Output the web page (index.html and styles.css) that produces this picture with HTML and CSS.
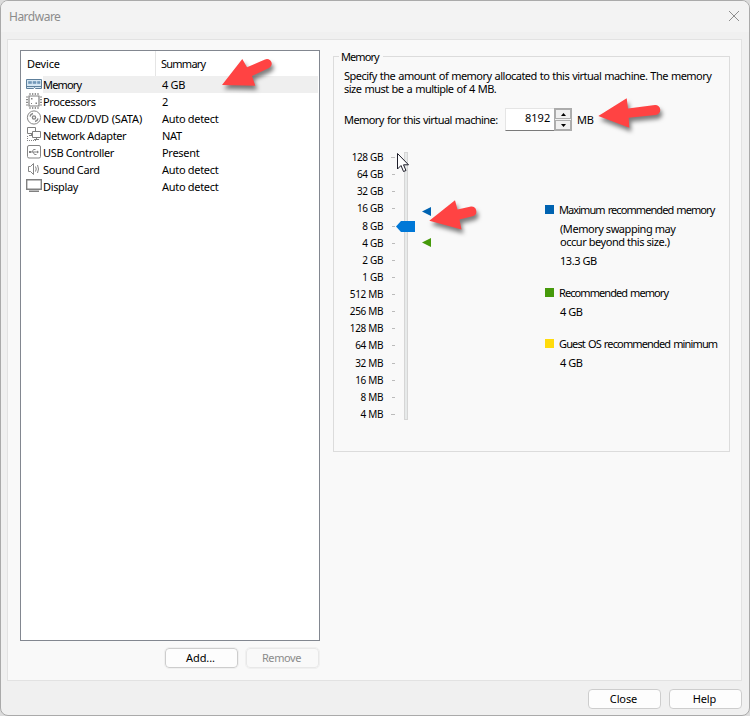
FILE: index.html
```html
<!DOCTYPE html>
<html lang="en">
<head>
<meta charset="utf-8">
<title>Hardware</title>
<link rel="stylesheet" href="styles.css">
</head>
<body>
<div class="window">
  <header class="titlebar"><span>Hardware</span>
    <svg class="x" width="12" height="12" viewBox="0 0 12 12"><path d="M1 1L11 11M11 1L1 11" stroke="#8e8e8e" fill="none"/></svg>
  </header>
  <main class="panel">
    <section class="left">
      <div class="list">
        <div class="head"><span class="c1">Device</span><span class="c2">Summary</span></div>
        <div class="row sel"><svg width="17" height="17" viewBox="0 0 17 17"><path d="M.5 3.500H15.500V12.500H9.500L8.500 11.500 7.500 12.500H.5Z" fill="#d5e6f2" stroke="#5d7f9b"/><path d="M2.500 5.500h3v2h-3zM7 5.500h3v2H7zM11.500 5.500h2.500v2h-2.500z" fill="#7097b8" stroke="#7097b8" stroke-width=".6"/><path d="M1 10.500h15" stroke="#5d7f9b"/></svg><span class="name tight">Memory</span><span class="val">4 GB</span></div>
        <div class="row"><svg width="17" height="17" viewBox="0 0 17 17"><path d="M3 3h10v10H3z" fill="none" stroke="#808080" stroke-width="1.200"/><path d="M4 0v2M6.700 0v2M9.300 0v2M12 0v2M4 14v2M6.700 14v2M9.300 14v2M12 14v2M0 4h2M0 6.700h2M0 9.300h2M0 12h2M14 4h2M14 6.700h2M14 9.300h2M14 12h2" stroke="#8a8a8a" stroke-width="1.200"/><path d="M5 5h1.500v1.500H5zM9.500 9.500h1.500V11H9.500zM5 10h1v1H5z" fill="#808080"/></svg><span class="name">Processors</span><span class="val">2</span></div>
        <div class="row"><svg width="17" height="17" viewBox="0 0 17 17"><g fill="none" stroke="#858585"><circle cx="8" cy="7.500" r="6.600"/><circle cx="8" cy="7.500" r="1.600" stroke-width="1.400"/><path d="M4 6.500a4 4 0 0 1 3-3M12 8.500a4 4 0 0 1-3 3" stroke-width="1.400"/></g></svg><span class="name cd">New CD/DVD (SATA)</span><span class="val">Auto detect</span></div>
        <div class="row"><svg width="17" height="17" viewBox="0 0 17 17"><g fill="#fff" stroke="#808080"><path d="M1.500.5h8v6h-8zM3 8.500h4M5.500 6.500v2"/><path d="M6.500 4.500h8v6h-8zM8 12.500h5M10.500 10.500v2"/><path d="M1.500 9v5M1 13.500h9" stroke-dasharray="1 1"/></g></svg><span class="name">Network Adapter</span><span class="val">NAT</span></div>
        <div class="row"><svg width="17" height="17" viewBox="0 0 17 17"><g fill="none" stroke="#858585"><rect x="1.500" y="1.500" width="13" height="12.500" rx="1.500"/><path d="M3.500 8h8M6 8l1.500-2.500h2M7 8l1.500 2.500h2"/></g><path d="M11 6.500l2 1.500-2 1.500zM3 7h2v2H3z" fill="#808080"/></svg><span class="name">USB Controller</span><span class="val">Present</span></div>
        <div class="row"><svg width="17" height="17" viewBox="0 0 17 17"><g fill="none" stroke="#858585"><path d="M2.500 5.500H4.500L7.500 2.500v11L4.500 10.500H2.500z"/><path d="M9.500 5.500q1.500 2.500 0 5M11.500 4q2 4 0 8"/></g></svg><span class="name">Sound Card</span><span class="val">Auto detect</span></div>
        <div class="row"><svg width="17" height="17" viewBox="0 0 17 17"><path d="M.7 1.700h14.600v9.600H.7zM3 13.300h10" fill="none" stroke="#808080" stroke-width="1.400"/></svg><span class="name">Display</span><span class="val">Auto detect</span></div>
      </div>
      <div class="actions"><button>Add...</button><button disabled>Remove</button></div>
    </section>
    <section class="group">
      <h2 class="tight">Memory</h2>
      <p class="intro">Specify the amount of memory allocated to this virtual machine. The memory<br>size must be a multiple of 4 MB.</p>
      <div class="amount"><span class="label">Memory for this virtual machine:</span>
        <div class="spin"><span>8192</span><div class="updown"><i><svg width="5" height="3"><path d="M0 3L2.500 0L5 3z"/></svg></i><i><svg width="5" height="3"><path d="M0 0L2.500 3L5 0z"/></svg></i></div></div><span>MB</span></div>
      <div class="body">
        <ul class="scale"><li>128 GB</li><li>64 GB</li><li>32 GB</li><li>16 GB</li><li>8 GB</li><li>4 GB</li><li>2 GB</li><li>1 GB</li><li>512 MB</li><li>256 MB</li><li>128 MB</li><li>64 MB</li><li>32 MB</li><li>16 MB</li><li>8 MB</li><li>4 MB</li></ul>
        <div class="track"></div>
        <div class="legend">
          <div class="item blue"><b class="tight">Maximum recommended memory</b><p>(Memory swapping may<br>occur beyond this size.)</p><p>13.3 GB</p></div>
          <div class="item green"><b class="tight">Recommended memory</b><p>4 GB</p></div>
          <div class="item yellow"><b class="tight">Guest OS recommended minimum</b><p>4 GB</p></div>
        </div>
      </div>
    </section>
  </main>
  <footer><button>Close</button><button>Help</button></footer>
</div>
<svg class="overlay" width="750" height="716" viewBox="0 0 750 716">
  <path d="M396 226.500L401 221H415V232H401z" fill="#0078d7"/>
  <path d="M422 211.500L431 207V216z" fill="#0063b1"/>
  <path d="M422 242.500L431 238V247z" fill="#469a0b"/>
  <path d="M397.500 153.500V169L401 165.500L403.500 171.500L406 170.500L403.500 164.800H408.500z" fill="#fff" stroke="#1c1c28"/>
  <g class="arrows" fill="#ff4343">
    <path d="M222 85L242.300 59L247 67.300L265 59.500A4.600 4.600 0 0 1 269 68L252 76L255.300 85.700z"/>
    <path d="M598.300 116L626.700 98.300L628 108.500L655 105A5 5 0 0 1 655.500 115L628.700 117.700L629.300 127.700z"/>
    <path d="M429.300 220.700L455 200.300L457.500 209.500L471 206.500A5 5 0 0 1 473.500 216L459.500 219.500L461.500 229.500z"/>
  </g>
</svg>
</body>
</html>
```
FILE: styles.css
```css
* { box-sizing: border-box; margin: 0; padding: 0; }
body { width: 750px; height: 716px; overflow: hidden; background: #dcdcdc; font: 11px/13px "Noto Sans", sans-serif; letter-spacing: -.3px; color: #000; }
.tight { letter-spacing: -.92px; word-spacing: 1px; }
.window { width: 750px; height: 716px; border: 1px solid #aaa; border-radius: 8px; background: #f0f0f0; overflow: hidden; }
.titlebar { height: 31px; background: #f3f3f3; display: flex; justify-content: space-between; align-items: center; padding: 0 9px 0 8px; color: #8c8c8c; font-size: 12px; letter-spacing: -.5px; }
.titlebar span { margin-top: -1px; }
.titlebar .x { display: block; margin-top: -2px; }
.panel { margin: 7px 0 0 6px; width: 735px; height: 642px; border: 1px solid #e2e2e2; background: #f9f9f9; display: flex; align-items: flex-start; padding: 10px 0 0 12px; }
.left { width: 300px; }
.list { height: 591px; border: 1px solid #828790; background: #fff; }
.head { height: 25px; display: flex; line-height: 25px; }
.head .c1 { width: 135px; padding-left: 6px; border-right: 1px solid #e5e5e5; letter-spacing: -.2px; }
.head .c2 { padding-left: 5px; letter-spacing: -.75px; }
.row { height: 17px; display: flex; line-height: 17px; padding: 0 1px 0 5px; white-space: nowrap; }
.row svg { flex: none; }
.name { width: 119px; letter-spacing: -.35px; }
.name.tight { letter-spacing: -.84px; }
.name.cd { letter-spacing: -.15px; }
.val { flex: 1; }
.sel .name, .sel .val { background: #efefef; }
.actions { margin: 7px 1px 0 0; display: flex; justify-content: flex-end; gap: 8px; }
button { width: 73px; height: 20px; padding: 0 2px 2px 0; border: 1px solid #cdcdcd; border-radius: 4px; background: #fdfdfd; font: inherit; letter-spacing: -.1px; color: #000; }
.actions button { outline: 1px solid #f0f0f0; }
button:disabled { color: #8b8b8b; background: #f9f9f9; border-color: #e8e8e8; letter-spacing: -.4px; }
.group { width: 397px; height: 396px; margin: 6px 0 0 13px; border: 1px solid #dcdcdc; }
.group h2 { width: 44px; margin: -7px 0 0 5px; padding: 0 2px; background: #f9f9f9; font: inherit; }
.intro { margin: 6px 0 0 10px; white-space: nowrap; letter-spacing: -.53px; word-spacing: .7px; }
.amount { display: flex; height: 23px; margin: 13px 0 0 10px; align-items: center; }
.amount .label { width: 161px; white-space: nowrap; letter-spacing: -.57px; word-spacing: .8px; }
.spin { width: 67px; height: 23px; margin-right: 5px; border: 1px solid #e5e5e5; border-bottom-color: #7a7a7a; background: #fff; display: flex; justify-content: space-between; padding-left: 19px; line-height: 18px; letter-spacing: 0; }
.updown { width: 18px; height: 23px; margin: -1px -1px 0 0; border: 1px solid #ababab; background: #f0f0f0; }
.updown i { display: flex; height: 10px; border: 1px solid #adadad; align-items: center; justify-content: center; }
.updown i + i { margin-top: 1px; }
.body { display: flex; margin-top: 18px; }
.scale { list-style: none; flex: none; width: 61px; font-size: 10px; letter-spacing: -.45px; word-spacing: .5px; }
.scale li { height: 17.13px; line-height: 17px; display: flex; justify-content: flex-end; align-items: center; white-space: nowrap; }
.scale li::after { content: ""; width: 3px; height: 1px; background: #bbb; margin-left: 9px; }
.scale li:first-child::after, .scale li:last-child::after { width: 4px; margin-left: 8px; }
.track { flex: none; width: 4px; height: 268px; margin: 3px 0 0 9px; border: 1px solid #d6d6d6; background: #e7eaea; }
.legend { flex: none; margin: 54px 0 0 137px; white-space: nowrap; }
.item { margin-bottom: 19px; }
.item b { font-weight: 400; display: flex; align-items: center; gap: 5px; }
.item b::before { content: ""; width: 9px; height: 9px; background: #0063b1; }
.green b::before { background: #469a0b; }
.yellow b::before { background: #ffdb0c; }
.yellow b { letter-spacing: -.86px; }
.item p { margin: 6px 0 0 15px; letter-spacing: -.5px; }
.blue p { letter-spacing: -.45px; }
footer { display: flex; justify-content: flex-end; gap: 8px; padding: 8px 7px 0 0; }
.overlay { position: absolute; left: 0; top: 0; }
.arrows { filter: drop-shadow(2px 4px 2px rgba(0,0,0,.5)); }
```
